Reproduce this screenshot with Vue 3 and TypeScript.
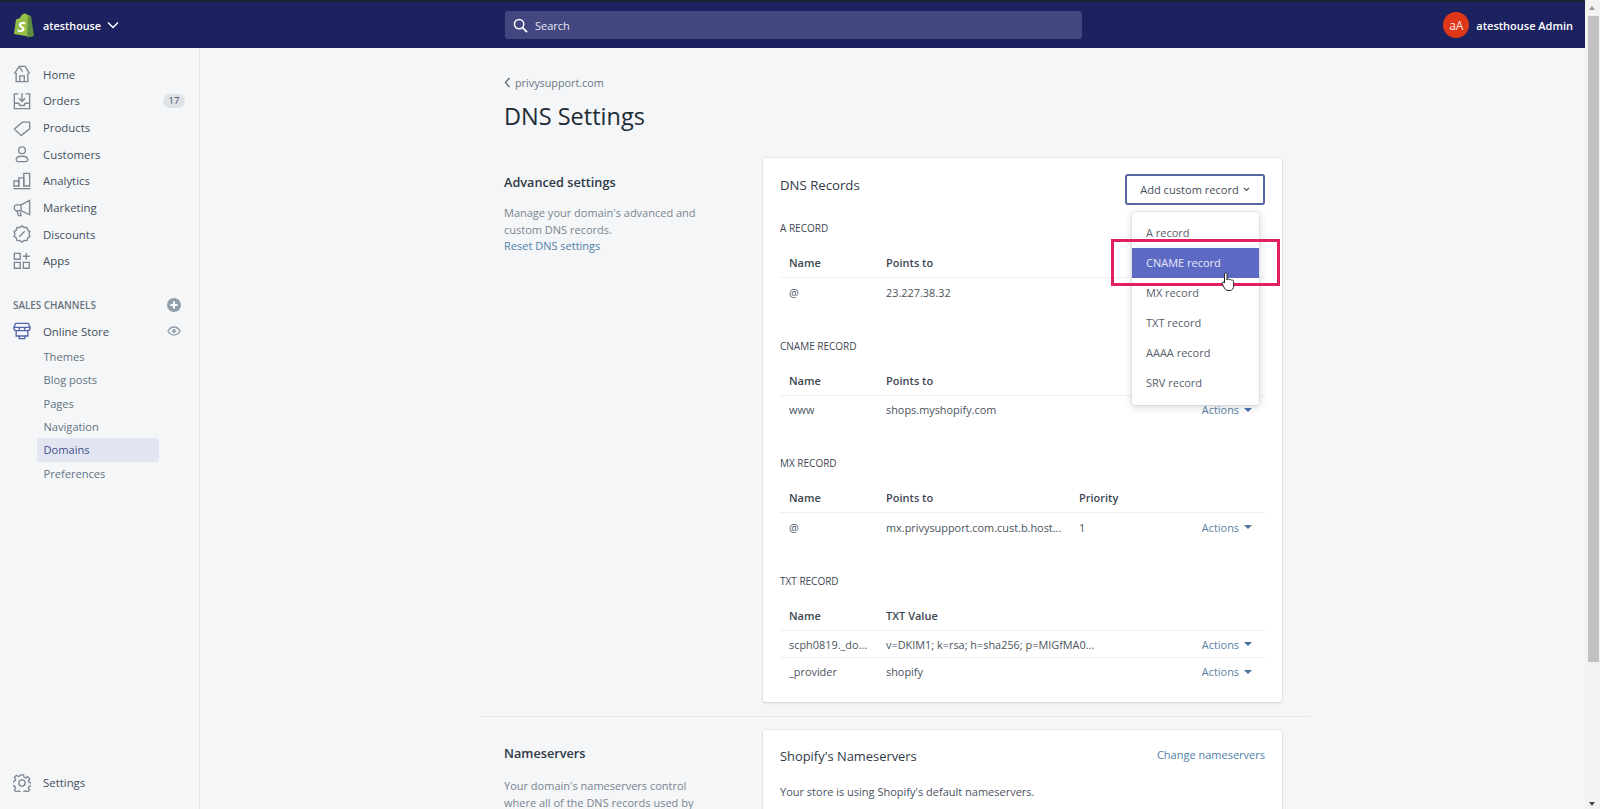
<script setup lang="ts">
interface NavItem { label: string; paths: string[]; badge?: string }
const nav: NavItem[] = [
  { label: 'Home', paths: ['M1.500 9.500 7 1.500h6.500l5 8', 'M3.500 8.500V18.500h13V8.500', 'M7.500 18.500V12h5v6.500', 'M7 1.500l3.500 6'] },
  { label: 'Orders', paths: ['M6 2H1.500v16.500h17V2H14', 'M10 1v9.500M6.500 7l3.500 3.500L13.500 7', 'M1.500 12.500h5l1 2.500h5l1-2.500h5'] },
  { label: 'Products', paths: ['M1.500 11 10.500 3.500h8V11L9 18.500z', 'M14.500 6.500h.01'] },
  { label: 'Customers', paths: ['M10 2a3.800 3.800 0 1 0 0 7.600A3.800 3.800 0 0 0 10 2z', 'M3.500 16.500c0-2.500 2.500-4 6.500-4s6.500 1.500 6.500 4c0 1-.8 2-2 2h-9c-1.200 0-2-1-2-2z'] },
  { label: 'Analytics', paths: ['M.5 18.500h19', 'M1 15.500V10h5.500v5.500z', 'M6.500 15.500V6.500H12v9', 'M12 15.500V1.500h6.500v14z'] },
  { label: 'Marketing', paths: ['M18.500 1.500v16L9 13H4a2.500 2.500 0 0 1-2.500-2.500V9A2.500 2.500 0 0 1 4 6.500h5z', 'M9 6.500V13', 'M4.500 13l1.500 5.500h3L8 14.500'] },
  { label: 'Discounts', paths: ['M10 1l2.500 1.800 3-.2.800 3 2.500 1.700L17.800 10l1 2.700-2.500 1.700-.8 3-3-.2L10 19l-2.500-1.800-3 .2-.8-3-2.500-1.700L2.200 10l-1-2.700 2.500-1.700.8-3 3 .2z', 'M7 13l6-6', 'M7.500 7.500h.01M12.500 12.500h.01'] },
  { label: 'Apps', paths: ['M1.500 1.500h6.500v6.500H1.500z', 'M1.500 11.500h6.500V18H1.500z', 'M11.500 11.500H18V18h-6.500z', 'M14.700 1v7.500M11 4.700h7.500'] },
]
nav[1].badge = '17'
const subnav = ['Themes', 'Blog posts', 'Pages', 'Navigation', 'Domains', 'Preferences']
const gearPaths = ['M8.300 1h3.400l.5 2.500 1.800.8 2.200-1.400 2.300 2.400-1.400 2.100.8 1.900 2.500.5v3.400l-2.500.5-.8 1.800 1.400 2.200-2.300 2.300-2.200-1.400-1.800.8-.5 2.500H8.300l-.5-2.500-1.800-.8-2.200 1.400-2.300-2.300 1.400-2.200-.8-1.800-2.500-.5V8.300l2.500-.5.8-1.900-1.400-2.100 2.300-2.400L6 2.800l1.800-.8z', 'M10 6.500a3.500 3.500 0 1 0 0 7 3.500 3.500 0 0 0 0-7z']
interface Rec { title: string; second: string; third?: string; rows: { name: string; value: string; third?: string }[] }
const records: Rec[] = [
  { title: 'A RECORD', second: 'Points to', rows: [{ name: '@', value: '23.227.38.32' }] },
  { title: 'CNAME RECORD', second: 'Points to', rows: [{ name: 'www', value: 'shops.myshopify.com' }] },
  { title: 'MX RECORD', second: 'Points to', third: 'Priority', rows: [{ name: '@', value: 'mx.privysupport.com.cust.b.host...', third: '1' }] },
  { title: 'TXT RECORD', second: 'TXT Value', rows: [
    { name: 'scph0819._do...', value: 'v=DKIM1; k=rsa; h=sha256; p=MIGfMA0...' },
    { name: '_provider', value: 'shopify' },
  ] },
]
const menu = ['A record', 'CNAME record', 'MX record', 'TXT record', 'AAAA record', 'SRV record']
</script>

<template>
  <div class="screen">
    <div class="page">
      <header class="topbar">
        <div class="brand">
          <svg class="logo" viewBox="0 0 22 25" width="22" height="25">
            <path d="M3 6.500 7 5C8 2 10 .5 12 .5c1 0 1.800.5 2.300 1.500L16 2.300 18.500 24 1 21z" fill="#95bf47" />
            <path d="M16 2.300 15 3l-1 21.500 7-1.500-3-20z" fill="#5e8e3e" />
            <text x="4.500" y="19" font-size="15" font-weight="700" font-style="italic" font-family="Open Sans, sans-serif" fill="#fff">S</text>
          </svg>
          <span class="brand-name">atesthouse</span>
          <svg class="chev" viewBox="0 0 12 8" width="12" height="8"><path d="M1 1.500 6 6.500 11 1.500" fill="none" stroke="#fff" stroke-width="1.500" /></svg>
        </div>
        <div class="search">
          <svg viewBox="0 0 16 16" width="15" height="15"><circle cx="6.500" cy="6.500" r="5" fill="none" stroke="#fff" stroke-width="1.600" /><path d="M10.200 10.200 15 15" stroke="#fff" stroke-width="1.800" /></svg>
          <span>Search</span>
        </div>
        <div class="user">
          <span class="avatar">aA</span>
          <span class="user-name">atesthouse Admin</span>
        </div>
      </header>

      <div class="body">
        <aside class="sidebar">
          <nav class="nav">
            <a v-for="item in nav" :key="item.label" class="nav-item">
              <svg class="icon" viewBox="0 0 20 20" width="18" height="18">
                <path v-for="d in item.paths" :key="d" :d="d" />
              </svg>
              <span class="nav-label">{{ item.label }}</span>
              <span v-if="item.badge" class="badge">{{ item.badge }}</span>
            </a>
          </nav>
          <div class="channels">
            <span>SALES CHANNELS</span>
            <svg viewBox="0 0 14 14" width="14" height="14"><circle cx="7" cy="7" r="7" fill="#919eab" /><path d="M7 3.500v7M3.500 7h7" stroke="#fff" stroke-width="2" /></svg>
          </div>
          <a class="nav-item store">
            <svg class="icon store-icon" viewBox="0 0 20 20" width="18" height="18">
              <path d="M3 1.500h14l2 4.500v1.500a2.500 2.500 0 0 1-2.500 2h-13A2.500 2.500 0 0 1 1 7.500V6z" />
              <path d="M1 6h18M7 6v4M13 6v4" />
              <path d="M3.500 10v5.500h13V10" />
              <path d="M7 15.500V18.500h6v-3" />
            </svg>
            <span class="nav-label">Online Store</span>
            <svg class="eye" viewBox="0 0 14 10" width="14" height="10"><path d="M1 5c1.500-2.700 3.500-4 6-4s4.500 1.300 6 4c-1.500 2.700-3.500 4-6 4S2.500 7.700 1 5z" fill="none" stroke="#919eab" stroke-width="1.400" /><circle cx="7" cy="5" r="1.900" fill="#919eab" /></svg>
          </a>
          <div class="subnav">
            <a v-for="s in subnav" :key="s" class="sub-item" :class="{ active: s === 'Domains' }">{{ s }}</a>
          </div>
          <a class="nav-item settings">
            <svg class="icon" viewBox="0 0 20 20" width="18" height="18">
              <path v-for="d in gearPaths" :key="d" :d="d" />
            </svg>
            <span class="nav-label">Settings</span>
          </a>
        </aside>

        <main class="main">
          <div class="content">
            <div class="breadcrumb">
              <svg viewBox="0 0 7 11" width="7" height="11"><path d="M5.500 1 1.500 5.500 5.500 10" fill="none" stroke="#637381" stroke-width="1.500" /></svg>
              <span>privysupport.com</span>
            </div>
            <h1 class="title">DNS Settings</h1>

            <section class="layout">
              <div class="aside-col">
                <h2 class="aside-title">Advanced settings</h2>
                <p class="aside-text">Manage your domain's advanced and<br />custom DNS records.<br /><a class="link">Reset DNS settings</a></p>
              </div>
              <div class="card dns-card">
                <div class="card-head">
                  <h2 class="card-title">DNS Records</h2>
                  <button class="add-btn">Add custom record
                    <svg viewBox="0 0 8 6" width="7" height="5"><path d="M1 1l3 3 3-3" fill="none" stroke="#454f5b" stroke-width="1.400" /></svg>
                  </button>
                </div>
                <div v-for="rec in records" :key="rec.title" class="rec">
                  <div class="rec-title">{{ rec.title }}</div>
                  <div class="row head">
                    <span>Name</span><span>{{ rec.second }}</span><span>{{ rec.third }}</span><span></span>
                  </div>
                  <div v-for="r in rec.rows" :key="r.name" class="row">
                    <span>{{ r.name }}</span><span>{{ r.value }}</span><span>{{ r.third }}</span>
                    <span class="actions">Actions<i class="caret"></i></span>
                  </div>
                </div>
                <div class="menu">
                  <div v-for="m in menu" :key="m" class="menu-item" :class="{ hot: m === 'CNAME record' }">{{ m }}</div>
                </div>
                <div class="callout"></div>
                <svg class="hand" viewBox="0 0 14 20" width="14" height="20">
                  <path d="M3.500 1.500c.8-.8 2-.8 2.500.3V8l.3-.8c.8-.5 1.700-.3 2 .5.800-.5 1.700-.3 2 .5.800-.4 2-.1 2.300 1V14c0 2.500-1.300 4.500-3.600 4.500H7c-1.800 0-2.800-1-3.600-2.500L1 11.500c-.3-1 .8-2 1.800-1.300L3.500 11z" fill="#fff" stroke="#2b2b2b" stroke-width="1" />
                </svg>
              </div>
            </section>

            <div class="divider"></div>

            <section class="layout second">
              <div class="aside-col">
                <h2 class="aside-title">Nameservers</h2>
                <p class="aside-text ns">Your domain's nameservers control<br />where all of the DNS records used by</p>
              </div>
              <div class="card ns-card">
                <div class="ns-head">
                  <h2 class="card-title">Shopify's Nameservers</h2>
                  <a class="link change">Change nameservers</a>
                </div>
                <p class="ns-text">Your store is using Shopify's default nameservers.</p>
              </div>
            </section>
          </div>
        </main>
      </div>
    </div>
    <div class="scrollbar">
      <span class="arrow up"></span>
      <span class="thumb"></span>
      <span class="track"></span>
      <span class="arrow down"></span>
    </div>
  </div>
</template>

<style>
html, body { margin: 0; height: 100%; overflow: hidden; background: #f4f6f8; }
</style>

<style scoped>
.screen {
  display: flex; width: 1600px; height: 809px; overflow: hidden;
  font-family: "Open Sans", "Noto Sans", sans-serif; font-size: 11px; color: #3e4752; background: #f4f6f8;
}
.page { flex: 1; min-width: 0; display: flex; flex-direction: column; }
.topbar {
  height: 46px; flex: none; display: flex; align-items: center; position: relative;
  background: #1c2260; border-top: 2px solid #1b2333; color: #fff;
}
.brand { width: 505px; flex: none; display: flex; align-items: center; padding-left: 13px; box-sizing: border-box; }
.logo { flex: none; }
.brand-name { margin-left: 8px; font-weight: 600; font-size: 10.800px; }
.chev { margin-left: 6px; }
.search {
  width: 577px; height: 28px; flex: none; display: flex; align-items: center; gap: 7px; padding-left: 8px;
  box-sizing: border-box; background: #43467f; border-radius: 3px; font-size: 11px; color: #e6e8f5;
}
.user { margin-left: auto; display: flex; align-items: center; padding-right: 12px; }
.avatar {
  width: 26px; height: 26px; border-radius: 50%; background: #de3618; display: flex; align-items: center;
  justify-content: center; font-size: 12px; color: #fde9e3;
}
.user-name { margin-left: 7px; font-weight: 600; font-size: 11px; }
.body { flex: 1; display: flex; min-height: 0; }
.sidebar {
  width: 200px; flex: none; box-sizing: border-box; border-right: 1px solid #e6e9ec; background: #f4f6f8;
  padding-top: 13px; display: flex; flex-direction: column;
}
.nav { display: flex; flex-direction: column; }
.nav-item {
  height: 26.650px; flex: none; display: flex; align-items: center; padding: 0 14px 0 13px; color: #454f5b; font-size: 11.400px;
}
.icon { flex: none; fill: none; stroke: #7d8894; stroke-width: 1.500; }
.nav-label { margin-left: 12px; flex: 1; }
.badge {
  width: 22px; height: 14px; border-radius: 8px; background: #dfe3e8; text-align: center; line-height: 14px; font-size: 9.500px; color: #454f5b;
}
.channels {
  margin-top: 20.600px; height: 20px; display: flex; align-items: center; justify-content: space-between;
  padding: 0 18px 0 13px; font-size: 9.900px; font-weight: 600; color: #69727d;
}
.store { margin-top: 3px; }
.store-icon { stroke: #5564a8; }
.eye { margin-right: 4px; }
.subnav { display: flex; flex-direction: column; padding-top: .5px; }
.sub-item {
  height: 23.400px; width: 122px; margin-left: 37px; box-sizing: border-box; padding-left: 6.500px; line-height: 23.400px;
  color: #637381; font-size: 11.100px; border-radius: 3px;
}
.sub-item.active { background: #e3e6f2; color: #3f4f87; font-weight: 500; }
.settings { margin-top: auto; margin-bottom: 13px; }
.main { flex: 1; min-width: 0; overflow: hidden; }
.content { width: 827px; margin: 0 auto; padding: 0 25px; box-sizing: border-box; height: 761px; }
.breadcrumb { padding-top: 27px; height: 14px; display: flex; align-items: center; gap: 4px; font-size: 10.800px; color: #6b7682; }
.title { margin: 12px 0 0; font-size: 23.500px; line-height: 30px; font-weight: 500; color: #212b36; }
.layout { display: flex; margin-top: 27px; }
.aside-col { width: 259px; flex: none; }
.aside-title { margin: 16px 0 0; font-size: 12.700px; line-height: 17px; font-weight: 600; color: #2f3945; }
.aside-text { margin: 14px 0 0; font-size: 11px; line-height: 16.500px; color: #7a8591; }
.link { color: #4f7ea8; }
.card { width: 519px; flex: none; background: #fff; border-radius: 3px; box-shadow: 0 0 0 1px rgba(63,63,68,.05), 0 1px 3px rgba(63,63,68,.15); position: relative; }
.dns-card { height: 544px; padding: 16px 17px 0; box-sizing: border-box; }
.card-head { height: 46px; display: flex; justify-content: space-between; align-items: flex-start; }
.card-title { margin: 0; font-size: 13.200px; line-height: 22px; font-weight: 500; color: #2f3945; }
.add-btn {
  width: 140px; height: 31px; box-sizing: border-box; border: 2px solid #5566a0; border-radius: 3px; background: #fff;
  font: inherit; font-size: 11.100px; color: #454f5b; padding: 0; display: flex; align-items: center; justify-content: center; gap: 4px;
}
.rec { height: 117.500px; }
.rec-title { height: 16px; line-height: 16px; font-size: 10px; font-weight: 500; color: #3e4752; }
.row {
  height: 27px; display: grid; grid-template-columns: 97px 193px 1fr 80px; align-items: center; padding: 1px 13px 0 9px;
  border-bottom: 1px solid #eef0f2; box-sizing: border-box; font-size: 10.900px; color: #4a535e; white-space: nowrap;
}
.row:last-child { border-bottom: 0; }
.row.head { height: 35px; margin-top: 7px; font-weight: 600; font-size: 11px; color: #3e4752; padding-top: 5px; }
.actions { display: flex; align-items: center; justify-content: flex-end; gap: 5px; color: #5a7fa3; }
.caret { width: 0; height: 0; border: 4px solid transparent; border-top: 4px solid #44739f; border-bottom: 0; }
.menu {
  position: absolute; left: 369px; top: 54px; width: 127px; height: 193px; box-sizing: border-box; padding-top: 6px;
  background: #fff; border-radius: 3px; box-shadow: 0 0 0 1px rgba(6,44,82,.06), 0 2px 8px rgba(33,43,54,.2);
}
.menu-item { height: 30px; line-height: 30px; padding-left: 14px; font-size: 11px; color: #56606b; }
.menu-item.hot { background: #5c6ac4; color: #e5e8f8; }
.callout {
  position: absolute; left: 348px; top: 81px; width: 169px; height: 47px; box-sizing: border-box;
  border: 3px solid #e2205f;
}
.hand { position: absolute; left: 458px; top: 114px; }
.divider { height: 1px; background: #e6e9ec; margin: 14px -29px 0 -24px; }
.second { margin-top: 13px; }
.second .aside-title { margin-top: 15px; }
.ns { margin-top: 16px; }
.ns-card { height: 120px; padding: 15px 17px 0; box-sizing: border-box; }
.ns-head { display: flex; justify-content: space-between; align-items: flex-start; }
.ns-head .card-title { font-size: 12.900px; }
.change { margin-top: 2px; font-size: 11px; }
.ns-text { margin: 17px 0 0; font-size: 11px; color: #4a535e; }
.scrollbar { width: 15px; flex: none; display: flex; flex-direction: column; background: #f2f3f1; padding-top: 2px; box-sizing: border-box; }
.arrow { height: 14px; flex: none; position: relative; }
.arrow::after { content: ""; position: absolute; left: 4px; width: 0; height: 0; border: 3.500px solid transparent; }
.arrow.up::after { top: 4px; border-bottom: 4px solid #9a9a9a; border-top: 0; }
.arrow.down::after { bottom: 3px; border-top: 4px solid #4a4a4a; border-bottom: 0; }
.thumb { height: 646px; flex: none; background: #c1c1c1; margin: 0 1px 0 3px; }
.track { flex: 1; }
</style>
